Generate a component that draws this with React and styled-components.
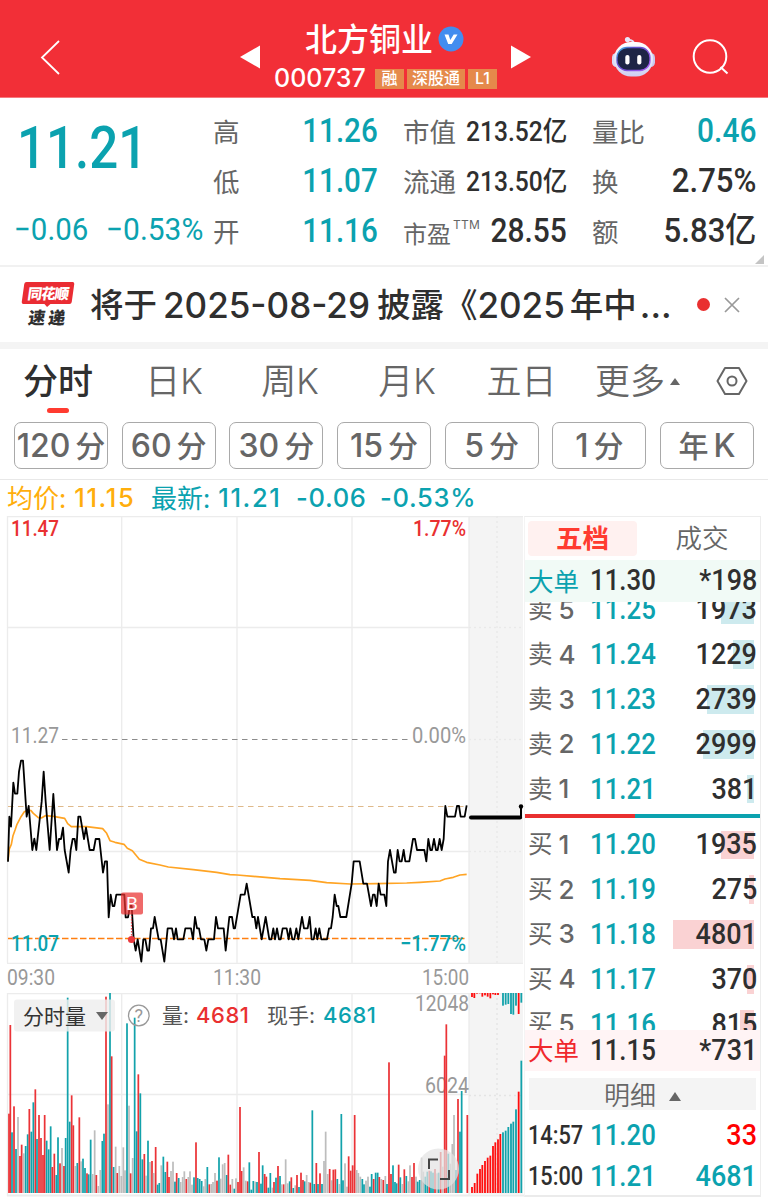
import React from 'react';
import styled, { createGlobalStyle } from 'styled-components';

const RED = '#f22f37';
const TEAL = '#0ba2af';
const DARK = '#2f2f2f';
const GRAY = '#666666';
const CJK = '"Noto Sans CJK SC"';

const GlobalStyle = createGlobalStyle`
  * { box-sizing: border-box; }
  body {
    margin: 0;
    background: #fff;
    font-family: Inter, ${CJK}, sans-serif;
    color: ${DARK};
  }
`;

const Page = styled.div`
  width: 768px;
  height: 1197px;
  overflow: hidden;
  background: #fff;
  white-space: nowrap;
`;

// condensed figures used for every price and volume
const Num = styled.span`
  display: inline-block;
  flex: none;
  font-family: Roboto, ${CJK}, sans-serif;
  font-weight: ${p => p.$weight || 500};
  font-size: ${p => p.$size || 34}px;
  line-height: 1;
  color: ${p => p.$color || DARK};
  padding: ${p => p.$pad || 0};
  transform: scaleX(${p => p.$sx || 0.88});
  transform-origin: ${p => p.$from || 'right'} center;
`;

const Cn = styled.span`
  display: inline-block;
  font-family: ${CJK}, sans-serif;
  font-size: ${p => p.$size || 26}px;
  font-weight: ${p => p.$weight || 400};
  line-height: 1;
  padding-bottom: 0.11em;
  margin: 0 ${p => p.$mr || 0}px 0 ${p => p.$ml || 0}px;
  color: ${p => p.$color || 'inherit'};
`;

/* header */
const Header = styled.header`
  display: grid;
  grid-template-columns: 240px 22px 1fr 22px 100px 76px 60px;
  height: 98px;
  background: ${RED};
  border-bottom: 1px solid #f6797e;
  color: #fff;
`;

const IconCell = styled.div`
  padding: ${p => p.$pad};
  svg { display: block; }
`;

const Title = styled.div`
  display: flex;
  flex-direction: column;
  padding-top: 20px;
`;

const NameRow = styled.div`
  display: flex;
  align-items: center;
  height: 38px;
  padding-left: 43px;
  gap: 5px;
`;

const CodeRow = styled.div`
  display: flex;
  align-items: center;
  height: 41px;
  padding-left: 12px;
  font-size: 25px;
  font-weight: 500;
  line-height: 1;
  gap: 3px;
`;

const Code = styled.span`
  width: 98px;
`;

const Tag = styled.span`
  width: ${p => p.$w}px;
  height: 20px;
  background: #e5894b;
  font: 500 16px/19px Inter, ${CJK}, sans-serif;
  text-align: center;
`;

/* quote block */
const Quote = styled.section`
  display: grid;
  grid-template-columns: 188px 165px 164px 164px;
  column-gap: 25px;
  height: 169px;
  padding-top: 8px;
  border-bottom: 2px solid #f1f1f1;
  position: relative;
`;

const Big = styled.div`
  height: 100px;
  padding: 12px 0 0 17px;
`;

const Changes = styled.div`
  display: flex;
  height: 46px;
  align-items: center;
  padding-left: 14px;
`;

const Slot = styled.div`
  flex: none;
  width: ${p => p.$w}px;
`;

const Stats = styled.div`
  display: flex;
  flex-direction: column;
`;

const Stat = styled.div`
  display: flex;
  align-items: center;
  justify-content: space-between;
  height: 50px;
  color: ${GRAY};
  > ${Cn} {
    padding: ${p => p.$drop || 0}px 0 0;
  }
  > ${Num} {
    margin-top: ${p => p.$nudge || 0}px;
    margin-bottom: ${p => (p.$nudge ? 0 : 2)}px;
  }
`;

const Ttm = styled.sup`
  font: 400 12px/12px Inter, sans-serif;
  letter-spacing: 0.2px;
  margin-left: 2px;
  vertical-align: 14px;
`;

const Corner = styled.span`
  position: absolute;
  right: 4px;
  bottom: 1px;
  border-left: 9px solid transparent;
  border-bottom: 9px solid #c4c4c4;
`;

/* notice */
const Notice = styled.section`
  display: flex;
  align-items: center;
  height: 82px;
  border-bottom: 7px solid #f4f4f4;
  padding-left: 22px;
  font-size: 35px;
  font-weight: 500;
`;

const Logo = styled.div`
  width: 53px;
  height: 46px;
  margin: 1px 15px 0 0;
  text-align: center;
`;

const LogoTop = styled.div`
  position: relative;
  height: 22px;
  width: 50px;
  margin-left: 1px;
  background: #ea2c33;
  border-radius: 2px;
  color: #fff;
  transform: skewX(-8deg);
  font: 900 14.5px/21px ${CJK}, sans-serif;
  letter-spacing: -1px;
  &::after {
    content: '';
    position: absolute;
    left: 22px;
    top: 21px;
    border: 4px solid transparent;
    border-top-color: #ea2c33;
  }
`;

const LogoBottom = styled.div`
  margin-top: 3px;
  transform: skewX(-8deg);
  font: 900 17px/19px ${CJK}, sans-serif;
  letter-spacing: 3px;
`;

const NoticeText = styled.div`
  display: flex;
  align-items: center;
  width: 607px;
  height: 40px;
`;

const Dot = styled.i`
  width: 13px;
  height: 13px;
  border-radius: 50%;
  background: #e93030;
  margin-right: 14px;
`;

/* tabs */
const Tabs = styled.nav`
  display: flex;
  height: 71px;
  color: ${GRAY};
`;

const Tab = styled.div`
  width: ${p => p.$w || 116}px;
  padding-top: 12px;
  text-align: center;
  font: 300 35px/40px Inter, ${CJK}, sans-serif;
  font-weight: ${p => (p.$active ? 500 : 350)};
  color: ${p => (p.$active ? DARK : GRAY)};
  &::after {
    content: '';
    display: ${p => (p.$active ? 'block' : 'none')};
    width: 22px;
    height: 5px;
    margin: 7px auto 0;
    border-radius: 3px;
    background: #ff3b30;
  }
`;

const Triangle = styled.i`
  display: inline-block;
  border: ${p => p.$s}px solid transparent;
  border-top-width: 0;
  border-bottom: ${p => p.$h}px solid ${GRAY};
  margin-left: ${p => p.$ml || 0}px;
  vertical-align: ${p => p.$va || 0}px;
`;

const Intervals = styled.div`
  display: grid;
  grid-template-columns: repeat(7, 94px);
  justify-content: space-between;
  height: 60px;
  padding: 2px 14px 0;
  border-bottom: 1px solid #e8e8e8;
`;

const Interval = styled.button`
  height: 47px;
  padding: 0;
  border: 1px solid #a9a9a9;
  border-radius: 7px;
  background: #fff;
  color: ${GRAY};
  display: flex;
  align-items: center;
  justify-content: center;
  gap: 5px;
  font: 500 32px/1 Inter, sans-serif;
`;

const Legend = styled.div`
  display: flex;
  align-items: center;
  height: 36px;
  padding-left: 7px;
`;

const LegendItem = styled.span`
  display: flex;
  align-items: center;
  width: ${p => p.$w}px;
  font-size: 25.5px;
  font-weight: 500;
  line-height: 1;
  letter-spacing: ${p => p.$ls || 0.7}px;
  color: ${p => p.$color || TEAL};
  ${Cn} {
    letter-spacing: 0;
  }
`;

/* body */
const Body = styled.main`
  display: flex;
  height: 681px;
`;

const ChartCol = styled.div`
  width: 524px;
  svg { display: block; }
`;

const Book = styled.aside`
  width: 237px;
  height: 681px;
  display: flex;
  flex-direction: column;
  border: 1px solid #ededed;
  border-left-color: #f4f4f4;
  border-bottom: 2px solid #ebebeb;
`;

const BookTabs = styled.div`
  display: flex;
  align-items: center;
  height: 43px;
  padding-left: 3px;
  flex: none;
`;

const BookTab = styled.div`
  flex: none;
  width: ${p => (p.$active ? 109 : 130)}px;
  height: 35px;
  border-radius: 4px;
  text-align: center;
  font: ${p => (p.$active ? 700 : 350)} 26.5px/32px ${CJK}, sans-serif;
  color: ${p => (p.$active ? '#ff3b30' : GRAY)};
  background: ${p => (p.$active ? '#fff1f0' : 'none')};
`;

const Row = styled.div`
  flex: none;
  display: grid;
  grid-template-columns: 62px 70px 1fr;
  align-items: center;
  height: ${p => p.$h || 44.8}px;
  padding: 0 3px;
  background: ${p => p.$bg || 'none'};
  color: ${GRAY};
`;

const Level = styled.span`
  display: flex;
  align-items: center;
  gap: 6px;
  font-size: 26px;
  font-weight: 500;
  line-height: 1;
`;

const Qty = styled.span`
  display: flex;
  align-items: center;
  justify-content: flex-end;
  height: 28.5px;
  background: linear-gradient(${p => p.$bar}, ${p => p.$bar}) no-repeat;
  background-size: ${p => p.$len}px 100%;
  background-position: right 3px top 0;
`;

const Asks = styled.div`
  flex: none;
  height: 212px;
  overflow: hidden;
  display: flex;
  flex-direction: column;
  justify-content: flex-end;
  padding-bottom: 2px;
`;

const Bids = styled.div`
  flex: none;
  height: 212px;
  overflow: hidden;
  padding-top: 5px;
`;

const Ratio = styled.div`
  flex: none;
  height: 4px;
  background: linear-gradient(90deg, #e93030 47%, ${TEAL} 47%);
`;

const Detail = styled.div`
  flex: none;
  height: 32px;
  margin: 7px 4px 5px;
  background: #f4f4f4;
  text-align: center;
  font: 350 26px/31px ${CJK}, sans-serif;
  color: ${GRAY};
`;

const PRICE = '24,395 28,260 33,290 40,158 45,191 52,191 57,125 63,92 69,92 80,260 86,228 97,360 103,326 109,360 120,260 125,215 131,125 137,215 149,360 160,192 171,360 177,327 183,327 189,293 194,360 206,428 212,360 218,327 224,327 229,360 235,260 241,260 252,327 258,293 269,360 281,360 287,327 298,327 309,428 315,394 321,394 326,562 332,494 338,528 343,528 349,494 373,494 377,562 384,562 390,528 395,528 401,628 407,662 413,628 424,695 430,628 436,628 442,662 447,662 453,595 459,595 464,561 476,628 482,628 493,695 503,595 516,595 522,628 528,595 533,628 550,628 556,595 573,595 579,628 585,561 591,595 597,595 603,628 613,628 619,662 625,628 642,628 648,561 654,595 671,595 677,662 688,561 696,561 701,595 705,595 722,494 734,494 740,461 757,561 764,561 769,595 774,561 785,628 797,561 808,628 814,628 820,595 825,628 831,595 837,628 842,628 848,595 860,595 866,628 871,595 877,628 883,628 889,595 895,628 906,561 912,595 923,595 929,561 935,628 941,628 947,595 952,628 958,595 964,628 981,628 987,595 993,595 998,561 1004,494 1010,528 1015,528 1021,561 1039,561 1055,461 1061,394 1079,394 1090,461 1101,461 1113,528 1119,494 1124,494 1130,528 1136,461 1142,494 1153,494 1159,528 1164,394 1170,360 1182,428 1187,428 1193,360 1199,394 1205,394 1211,360 1216,394 1228,394 1239,327 1245,327 1251,360 1273,360 1279,394 1285,327 1291,360 1296,360 1302,327 1308,360 1313,360 1319,327 1325,360 1331,327 1336,228 1342,260 1365,260 1371,228 1377,228 1382,260 1394,260 1400,226';

const AVERAGE = '24,392 28,357 34,343 39,317 46,298 51,283 63,260 73,245 84,240 93,242 100,250 115,263 124,264 136,257 160,259 194,265 203,281 214,290 260,290 308,296 320,310 330,332 345,337 372,343 382,355 397,362 418,388 440,397 480,405 505,411 580,419 650,427 690,434 712,435 760,439 840,446 930,451 980,458 1050,462 1130,461 1220,459 1260,457 1320,453 1335,447 1360,442 1380,435 1400,433';

// x, colour, top of each minute bar
const VOLUME = '27r401 31r135 36t457 42r379 48t507 54g411 60r528 65r494 71g520 77t498 83t463 88r387 94t455 100t367 106r328 111t477 117r405 123r474 129r525 134r405 140t482 146t508 152t439 157r561 163r521 169t585 174t472 180r550 186g504 192r558 197t474 203t53 209t425 215r346 220r436 226g558 232t549 238r412 243g544 249t536 255t564 261r580 266t583 272t479 278g582 284g451 289r585 295g618 301g570 307t483 312t461 318r50 324g373 330t39 335r229 341t561 347g500 352r579 358g558 364g588 370g502 375g571 381t130 387g377 392r580 398g534 404t113 410t454 415r283 421t340 427t538 433r522 438g587 444t482 450g546 456r543 461g579 467r501 473t614 478t609 484g556 490t530 496t576 502r545 507r591 513g573 519g545 525t605 530r579 536t594 542g606 548g591 553g574 559r597 565g591 570g574 576g614 582t592 588r487 593t594 599t597 605t603 611g619 616g597 622t561 628r613 634g612 639g606 645g579 651r602 657t532 662g596 668g553 674g549 680t585 685r524 691r614 697g597 703t626 708g595 714r606 720r381 725r573 731g562 737g602 743r604 748t547 754t629 760t603 766g605 771t606 777r516 783t611 788t556 794r582 799r590 805t623 811t579 817g623 822r606 828t593 834r558 840t588 845g613 851r613 857g538 863g610 869t604 874r592 880t624 886g616 891r585 897t621 903r578 909r600 914t604 920g585 926g606 931r608 937t391 943t612 949r549 954t612 960r580 966t612 972g543 977g455 983g582 989r567 995g601 1000r569 1006r568 1012t597 1018g612 1024t402 1029t601 1035g550 1041g620 1046r529 1052r572 1058r556 1064r405 1070g570 1075g579 1081g590 1087t597 1092t613 1098g602 1104g590 1110t620 1115t582 1121r597 1127t578 1133t578 1138r591 1144g597 1150r600 1156g588 1161t612 1167r247 1173r582 1179t556 1185t606 1190t610 1196r554 1201t592 1207g612 1213r568 1219t588 1225g604 1230g556 1236r591 1242r549 1248g590 1253t605 1259t600 1265g533 1270g575 1276t590 1282t575 1288r572 1293t574 1299t578 1305r567 1311g580 1316t578 1322r516 1328g560 1334r227 1339r133 1345t521 1351g551 1357g492 1362g405 1368t570 1374r357 1380t455 1385t333 1402r405';
const AUCTION = '1416r621 1424r609 1432r581 1440r567 1447r555 1455r543 1463r533 1471r527 1479r498 1486r487 1494r478 1501r462 1509t457 1517t452 1525t441 1533t431 1540t425 1548t388 1556r335 1564t242';
const UNMATCHED = '1416r51 1423r54 1431r41 1439r40 1447r50 1455r46 1463r50 1471r55 1479r43 1486r45 1494r45 1509t77 1517t74 1525t72 1533t102 1540t104 1548t77 1556r102 1564t68';

const parse = s => s.split(' ').map(b => {
  const [, x, c, y] = b.match(/(\d+)([rtg])(\d+)/);
  return { x: +x, c, y: +y };
});

const Bars = ({ data, width, red, down }) =>
  parse(data).map(b => (
    <rect
      key={b.x}
      x={b.x - width / 2}
      y={down ? 38 : b.y}
      width={width}
      height={down ? b.y - 38 : 639 - b.y}
      fill={{ r: red, t: '#12a2ab', g: '#bdbdbd' }[b.c]}
    />
  ));

const Label = ({ x, y, w, size = 22, fill = '#999', end, children, weight = 400 }) => (
  <text x={x} y={y} fontSize={size} fill={fill} fontFamily="Roboto, sans-serif" fontWeight={weight}
    textAnchor={end ? 'end' : 'start'} textLength={w} lengthAdjust="spacingAndGlyphs">{children}</text>
);

const PriceChart = () => (
  <svg width="524" height="477" viewBox="0 0 524 477">
    <rect x="469" y="0" width="54" height="447" fill="#f4f4f4" />
    <g stroke="#ececec" strokeWidth="1.3" fill="none">
      <path d="M7 .5H523M7 447.3H523M7.5 0V447M121.7 0V447M237 0V447M352 0V447M469 0V447M7 111.5H469M7 335.5H469" />
      <path d="M469 111.5H523M469 223.5H523M469 335.5H523M497 0V447" strokeDasharray="2 3" stroke="#e9e9e9" />
    </g>
    <path d="M62 223.5H410" stroke="#8c8c8c" strokeWidth="1.2" strokeDasharray="5.5 4.5" />
    <path d="M8 290.5H467" stroke="#dfb98a" strokeWidth="1.2" strokeDasharray="5.5 4.5" />
    <path d="M8 422.5H467" stroke="#ff7f11" strokeWidth="1.6" strokeDasharray="6.5 2.5" />
    <Label x="11" y="20" w="48" fill="#e93030" weight="500">11.47</Label>
    <Label x="466" y="20" w="53" fill="#e93030" end weight="500">1.77%</Label>
    <Label x="11" y="227" w="48">11.27</Label>
    <Label x="466" y="227" w="54" end>0.00%</Label>
    <g transform="translate(0 214) scale(.33333)" fill="none" strokeLinejoin="round">
      <polyline points={AVERAGE} stroke="#ffa424" strokeWidth="5" />
      <polyline points={PRICE} stroke="#000" strokeWidth="5.4" />
    </g>
    <Label x="11" y="434.5" w="48" fill={TEAL} weight="500">11.07</Label>
    <Label x="466" y="434.5" w="66" fill={TEAL} end weight="500">−1.77%</Label>
    <path d="M470 301.5H521V290" fill="none" stroke="#000" strokeWidth="2" />
    <path d="M471 301.5H520" stroke="#000" strokeWidth="4" strokeLinecap="round" />
    <circle cx="521" cy="290.5" r="2.2" />
    <path d="M131.5 400V422" stroke="#ee4b50" strokeWidth="1.2" strokeDasharray="1.5 1.5" />
    <circle cx="131.5" cy="423.5" r="3.6" fill="#e9393f" />
    <rect x="121" y="376.5" width="22" height="22" rx="2" fill="#e93030" fillOpacity=".72" />
    <text x="131.8" y="394" fontSize="19" fontFamily="Roboto, sans-serif" fill="#fff" textAnchor="middle">B</text>
    <Label x="7" y="469" w="48">09:30</Label>
    <Label x="213" y="469" w="48">11:30</Label>
    <Label x="469" y="469" w="47" end>15:00</Label>
  </svg>
);

const VolumeChart = () => (
  <svg width="524" height="204" viewBox="0 0 524 204">
    <rect x="469" y="0" width="54" height="201" fill="#f4f4f4" />
    <g stroke="#ececec" strokeWidth="1.3" fill="none">
      <path d="M7 .7H523M7.5 0V203M121.7 0V200M237 0V200M352 0V200M469 0V203M7 101.5H469" />
      <path d="M469 102.5H523M497 0V200" strokeDasharray="2 3" stroke="#e4e4e4" />
      <path d="M7 202.5H524" strokeWidth="2" />
    </g>
    <Label x="469" y="18" w="54" end>12048</Label>
    <Label x="469" y="100" w="44" end>6024</Label>
    <g transform="translate(0 -13) scale(.33333)">
      <Bars data={VOLUME} width={5.2} red="#eb3337" />
      <Bars data={AUCTION} width={5.4} red="#ff0d0d" />
      <Bars data={UNMATCHED} width={5.4} red="#ff0d0d" down />
    </g>
    <rect x="14" y="6.5" width="101" height="32" rx="3" fill="#eee" fillOpacity=".82" />
    <text x="23" y="30.5" fontSize="21" fontFamily={`${CJK}, sans-serif`} fill="#333">分时量</text>
    <path d="M96 19H108L102 27Z" fill="#666" />
    <circle cx="138.8" cy="22.5" r="10.3" fill="none" stroke="#999" strokeWidth="1.3" />
    <text x="138.8" y="29" fontSize="18" fontFamily="Roboto, sans-serif" fill="#999" textAnchor="middle">?</text>
    <g fontFamily={`Inter, ${CJK}, sans-serif`} fontSize="21" fill="#555">
      <text x="162" y="29.5">量:</text>
      <text x="196" y="30" fill="#e93030" fontWeight="500" fontSize="22" textLength="53">4681</text>
      <text x="267" y="29.5">现手:</text>
      <text x="323" y="30" fill={TEAL} fontWeight="500" fontSize="22" textLength="53">4681</text>
    </g>
    <circle cx="438.5" cy="176" r="20.5" fill="#e3e3e3" fillOpacity=".72" />
    <path d="M429 176V166.5H438M449 177V186H440" fill="none" stroke="#444" strokeWidth="2" />
  </svg>
);

const Robot = () => (
  <svg width="46" height="44" viewBox="0 0 46 44">
    <defs>
      <linearGradient id="rim" x1="0" x2="1" y1="0" y2=".8">
        <stop offset="0" stopColor="#35c8e8" />
        <stop offset=".3" stopColor="#5c4fc8" />
        <stop offset="1" stopColor="#a15af0" />
      </linearGradient>
      <linearGradient id="shell" x1="0" x2="0" y1="0" y2="1">
        <stop offset="0" stopColor="#fff" />
        <stop offset="1" stopColor="#cfd0f2" />
      </linearGradient>
    </defs>
    <path d="M22 8C22 5 20 4 16 4" fill="none" stroke="#e2e3f8" strokeWidth="1.8" />
    <circle cx="15.5" cy="3.6" r="2.6" fill="#e8e8fa" />
    <rect x="0" y="17" width="9" height="14" rx="4.5" fill="#d8dbf5" />
    <rect x="34" y="17" width="9" height="14" rx="4.5" fill="#c9c9ed" />
    <rect x="2" y="6" width="39" height="34.5" rx="17" fill="url(#shell)" />
    <rect x="5" y="11.5" width="33" height="23" rx="10" fill="#1d2546" stroke="url(#rim)" strokeWidth="1.3" />
    <rect x="13.3" y="19" width="4.2" height="9.5" rx="2" fill="#fff" />
    <rect x="25.2" y="19" width="4.2" height="9.5" rx="2" fill="#fff" />
  </svg>
);

const asks = [
  [5, '11.25', 1973, 33], [4, '11.24', 1229, 21], [3, '11.23', 2739, 47], [2, '11.22', 2999, 51], [1, '11.21', 381, 7],
];
const bids = [
  [1, '11.20', 1935, 33], [2, '11.19', 275, 5], [3, '11.18', 4801, 81], [4, '11.17', 370, 7], [5, '11.16', 815, 14],
];

const Price = props => <Num $size={29} $sx={0.89} $from="left" {...props} />;
const Volume = props => <Num $size={29} $sx={0.93} {...props} />;

const BookRow = ({ side, row: [n, price, qty, len], bar }) => (
  <Row>
    <Level><Cn $size={24.5}>{side}</Cn>{n}</Level>
    <Price $color={TEAL}>{price}</Price>
    <Qty $bar={bar} $len={len}><Volume>{qty}</Volume></Qty>
  </Row>
);

const BigOrder = ({ color, bg, price, qty }) => (
  <Row $h={41.5} $bg={bg}>
    <Cn $size={25.5} $color={color}>大单</Cn>
    <Price>{price}</Price>
    <Qty><Volume>{qty}</Volume></Qty>
  </Row>
);

const Trade = ({ time, price, qty, color }) => (
  <Row $h={41}>
    <Num $size={25} $sx={0.87} $from="left">{time}</Num>
    <Price $color={TEAL}>{price}</Price>
    <Qty><Volume $color={color}>{qty}</Volume></Qty>
  </Row>
);

export default function App() {
  return (
    <Page>
      <GlobalStyle />
      <Header>
        <IconCell $pad="39px 0 0 39px">
          <svg width="24" height="37"><path d="M20 2L3 18.5L20 35" fill="none" stroke="#fff" strokeWidth="1.8" /></svg>
        </IconCell>
        <IconCell $pad="45px 0 0">
          <svg width="20" height="24"><path d="M0 12L20 .5V23.5Z" fill="#fff" /></svg>
        </IconCell>
        <Title>
          <NameRow>
            <Cn $size={32} $weight={500}>北方铜业</Cn>
            <svg width="26" height="26" viewBox="0 0 26 26">
              <circle cx="13" cy="13" r="12.5" fill="#438def" />
              <path d="M6.500 8.500H10.500L12.300 14L15.700 8.500H19.500L13.700 18H10.200Z" fill="#fff" />
            </svg>
          </NameRow>
          <CodeRow>
            <Code>000737</Code>
            <Tag $w={29}>融</Tag>
            <Tag $w={58}>深股通</Tag>
            <Tag $w={29}>L1</Tag>
          </CodeRow>
        </Title>
        <IconCell $pad="45px 0 0 1px">
          <svg width="20" height="24"><path d="M20 12L0 .5V23.5Z" fill="#fff" /></svg>
        </IconCell>
        <IconCell $pad="36px 0 0 80px"><Robot /></IconCell>
        <IconCell $pad="38px 0 0 60px">
          <svg width="40" height="40" viewBox="0 0 40 40" fill="none" stroke="#fff" strokeWidth="2">
            <circle cx="18" cy="18.5" r="16.3" /><path d="M28.500 29L35.500 35.500" />
          </svg>
        </IconCell>
      </Header>

      <Quote>
        <div>
          <Big><Num $size={59} $sx={0.865} $from="left" $color={TEAL}>11.21</Num></Big>
          <Changes>
            <Slot $w={92}><Num $size={31} $sx={0.95} $from="left" $color={TEAL} $weight={400}>−0.06</Num></Slot>
            <Num $size={31} $sx={0.965} $from="left" $color={TEAL} $weight={400}>−0.53%</Num>
          </Changes>
        </div>
        <Stats>
          <Stat><Cn $size={26.5}>高</Cn><Num $sx={0.87} $color={TEAL}>11.26</Num></Stat>
          <Stat><Cn $size={26.5}>低</Cn><Num $sx={0.87} $color={TEAL}>11.07</Num></Stat>
          <Stat><Cn $size={26.5}>开</Cn><Num $sx={0.87} $color={TEAL}>11.16</Num></Stat>
        </Stats>
        <Stats>
          <Stat $nudge={3}><Cn $size={26.5}>市值</Cn><Num $size={27} $sx={0.91}>213.52亿</Num></Stat>
          <Stat $nudge={3}><Cn $size={26.5}>流通</Cn><Num $size={27} $sx={0.91}>213.50亿</Num></Stat>
          <Stat $drop={2}><Cn $size={24}>市盈<Ttm>TTM</Ttm></Cn><Num>28.55</Num></Stat>
        </Stats>
        <Stats>
          <Stat><Cn $size={26.5}>量比</Cn><Num $color={TEAL}>0.46</Num></Stat>
          <Stat><Cn $size={26.5}>换</Cn><Num $sx={0.915}>2.75%</Num></Stat>
          <Stat><Cn $size={26.5}>额</Cn><Num $sx={0.915}>5.83亿</Num></Stat>
        </Stats>
        <Corner />
      </Quote>

      <Notice>
        <Logo>
          <LogoTop>同花顺</LogoTop>
          <LogoBottom>速递</LogoBottom>
        </Logo>
        <NoticeText>
          <Cn $size={33.5} $weight={500} $mr={6}>将于</Cn>
          2025-08-29
          <Cn $size={33.5} $weight={500} $ml={7}>披露《</Cn>
          2025
          <Cn $size={33.5} $weight={500} $ml={5} $mr={3}>年中</Cn>
          ...
        </NoticeText>
        <Dot />
        <svg width="16" height="16"><path d="M1 1L15 15M15 1L1 15" stroke="#999" strokeWidth="1.7" /></svg>
      </Notice>

      <Tabs>
        <Tab $active $w={116}>分时</Tab>
        <Tab>日K</Tab>
        <Tab>周K</Tab>
        <Tab $w={118}>月K</Tab>
        <Tab $w={111}>五日</Tab>
        <Tab $w={121}>更多<Triangle $s={5.5} $h={7} $ml={5} $va={9} /></Tab>
        <IconCell $pad="17px 0 0 18px">
          <svg width="32" height="30" viewBox="0 0 32 30" fill="none" stroke="#666" strokeWidth="2">
            <path d="M9 2H23L30.5 15L23 28H9L1.5 15Z" strokeLinejoin="round" /><circle cx="16" cy="15" r="4.5" />
          </svg>
        </IconCell>
      </Tabs>
      <Intervals>
        {['120', '60', '30', '15', '5', '1'].map(n => (
          <Interval key={n}>{n}<Cn $size={30} $weight={500}>分</Cn></Interval>
        ))}
        <Interval><Cn $size={30} $weight={500}>年</Cn>K</Interval>
      </Intervals>
      <Legend>
        <LegendItem $w={144} $ls={1.6} $color="#ffae0c"><Cn $size={26} $mr={8}>均价:</Cn>11.15</LegendItem>
        <LegendItem $w={145} $ls={1.6}><Cn $size={26} $mr={8}>最新:</Cn>11.21</LegendItem>
        <LegendItem $w={84}>-0.06</LegendItem>
        <LegendItem>-0.53%</LegendItem>
      </Legend>
      <Body>
        <ChartCol>
          <PriceChart />
          <VolumeChart />
        </ChartCol>
        <Book>
          <BookTabs><BookTab $active>五档</BookTab><BookTab>成交</BookTab></BookTabs>
          <BigOrder color={TEAL} bg="#f1faf6" price="11.30" qty="*198" />
          <Asks>{asks.map(r => <BookRow key={r[0]} side="卖" row={r} bar="#cdeaee" />)}</Asks>
          <Ratio />
          <Bids>{bids.map(r => <BookRow key={r[0]} side="买" row={r} bar="#fad2d3" />)}</Bids>
          <BigOrder color="#f0282d" bg="#fff4f5" price="11.15" qty="*731" />
          <Detail>明细<Triangle $s={6} $h={9} $ml={13} $va={4} /></Detail>
          <Trade time="14:57" price="11.20" qty="33" color="#ff0000" />
          <Trade time="15:00" price="11.21" qty="4681" color={TEAL} />
        </Book>
      </Body>
    </Page>
  );
}
